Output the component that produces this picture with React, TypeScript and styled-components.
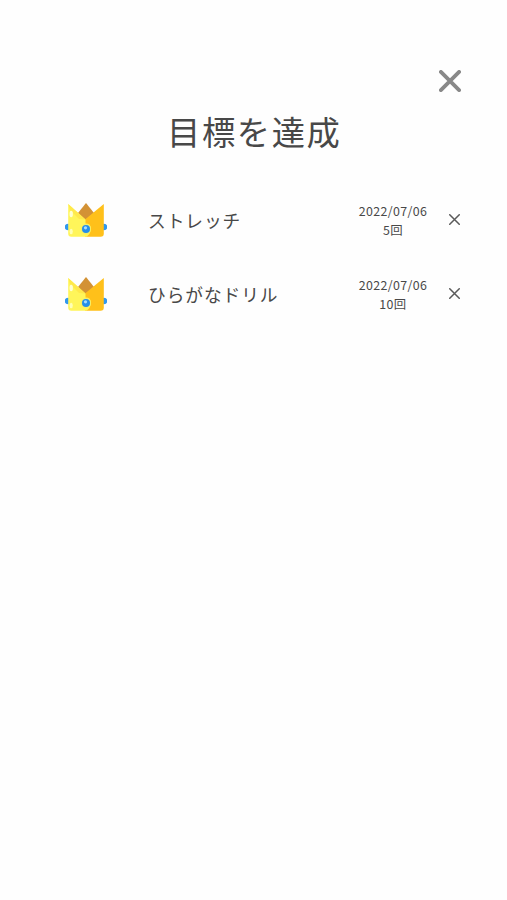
import React from "react";
import styled, { createGlobalStyle } from "styled-components";

const GlobalStyle = createGlobalStyle`
  * { box-sizing: border-box; }
  body {
    margin: 0;
    background: #fefefe;
    color: #484848;
    font-family: "Noto Sans CJK JP", sans-serif;
  }
`;

const Screen = styled.main`
  min-height: 900px;
  padding: 70px 46px 0 65px;
`;

const TopBar = styled.div`
  display: flex;
  justify-content: flex-end;
  height: 24px;
`;

const IconButton = styled.button`
  display: flex;
  padding: 0;
  border: 0;
  background: none;
`;

const Title = styled.h1`
  margin: 12px 0 0 102px;
  height: 50px;
  font-size: 33.3px;
  line-height: 50px;
  font-weight: 400;
  letter-spacing: 1.6px;
  white-space: nowrap;
`;

const GoalList = styled.ul`
  margin: 27px 0 0;
  padding: 0;
  list-style: none;
`;

const Goal = styled.li`
  display: grid;
  grid-template-columns: 83px 1fr 70px 33px;
  align-items: center;
  height: 74px;
`;

const GoalName = styled.span`
  font-size: 17.7px;
  line-height: 26px;
  letter-spacing: 0.95px;
`;

const Record = styled.div`
  padding-top: 2px;
  font-size: 12.4px;
  line-height: 19px;
  letter-spacing: 0.4px;
  text-align: center;
  white-space: nowrap;
`;

const DeleteButton = styled(IconButton)`
  justify-content: flex-end;
  padding: 0 1px 1px 0;
`;

const Crown = () => (
  <svg width="42" height="36" viewBox="0 0 42 36" aria-hidden="true">
    <circle cx="3" cy="25" r="3.2" fill="#3198ef" />
    <circle cx="39" cy="25" r="3.2" fill="#3198ef" />
    <path d="M21 1 29 11 21 25 13 11Z" fill="#d39235" />
    <path d="M38.8 2V31.5Q38.8 34.7 35.6 34.7H20V17.5Z" fill="#ffc01a" />
    <path
      d="M3.2 2 20.5 17.5V21.6Q26 21.6 26 26.8Q26 31.5 21.5 34.7H6.4Q3.2 34.7 3.2 31.5Z"
      fill="#fff55a"
    />
    <path d="M3.2 2 20.5 17.5 14 17 5 8Z" fill="#ffe94b" />
    <ellipse cx="6.2" cy="12" rx="1.7" ry="3.2" fill="#ffffd0" />
    <ellipse cx="6.2" cy="29.5" rx="1.6" ry="2.8" fill="#ffffb5" />
    <circle cx="21" cy="27" r="5" fill="#f6ed69" />
    <circle cx="21" cy="27" r="4" fill="#258fea" />
    <circle cx="20.5" cy="25.8" r="1.6" fill="#a5dcff" />
  </svg>
);

const Cross = ({ size, weight, color }: { size: number; weight: number; color: string }) => {
  const near = weight / 2;
  const far = size - near;
  return (
    <svg width={size} height={size} viewBox={`0 0 ${size} ${size}`} aria-hidden="true">
      <path
        d={`M${near} ${near} ${far} ${far}M${far} ${near} ${near} ${far}`}
        stroke={color}
        strokeWidth={weight}
        strokeLinecap="round"
      />
    </svg>
  );
};

const goals = [
  { name: "ストレッチ", date: "2022/07/06", count: "5回" },
  { name: "ひらがなドリル", date: "2022/07/06", count: "10回" },
];

export default function App() {
  return (
    <>
      <GlobalStyle />
      <Screen>
        <TopBar>
          <IconButton aria-label="閉じる">
            <Cross size={22} weight={3.8} color="#888888" />
          </IconButton>
        </TopBar>
        <Title>目標を達成</Title>
        <GoalList>
          {goals.map((goal) => (
            <Goal key={goal.name}>
              <Crown />
              <GoalName>{goal.name}</GoalName>
              <Record>
                <div>{goal.date}</div>
                <div>{goal.count}</div>
              </Record>
              <DeleteButton aria-label="削除">
                <Cross size={11} weight={1.5} color="#5a5a5a" />
              </DeleteButton>
            </Goal>
          ))}
        </GoalList>
      </Screen>
    </>
  );
}
